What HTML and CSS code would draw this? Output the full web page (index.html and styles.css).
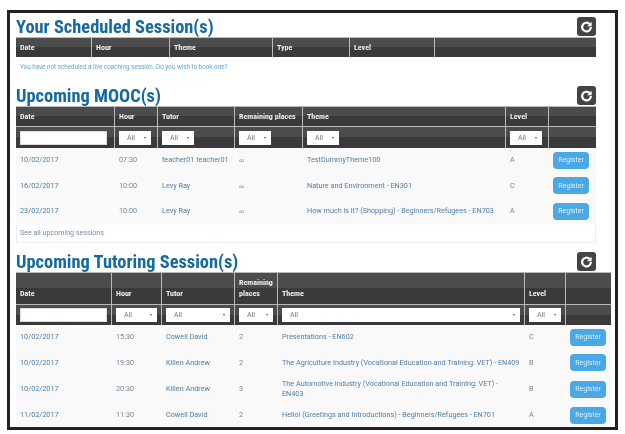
FILE: index.html
```html
<!DOCTYPE html>
<html lang="en">
<head>
    <meta charset="UTF-8">
    <meta name="viewport" content="width=device-width, initial-scale=1.0">
    <title>Sessions</title>
    <link rel="stylesheet" href="styles.css">
</head>
<body>
    <div class="frame">
        <section class="block">
            <div class="block-head">
                <h2>Your Scheduled Session(s)</h2>
                <button class="refresh-btn" aria-label="Refresh">
                    <svg viewBox="0 0 20 20" width="19" height="19"><path d="M13.3 7.4a4.6 4.6 0 1 0 1.3 3.1" fill="none" stroke="#fff" stroke-width="2.3"/><path d="M15.4 5v4.8h-4.8z" fill="#fff"/></svg>
                </button>
            </div>
            <table class="sessions scheduled">
                <colgroup><col class="c1"><col class="c2"><col class="c3"><col class="c4"><col class="c5"><col class="c6"></colgroup>
                <tr class="head-row"><th>Date</th><th>Hour</th><th>Theme</th><th>Type</th><th>Level</th><th></th></tr>
            </table>
            <p class="empty-msg">You have not scheduled a live coaching session. Do you wish to book one?</p>
        </section>

        <section class="block">
            <div class="block-head">
                <h2>Upcoming MOOC(s)</h2>
                <button class="refresh-btn" aria-label="Refresh">
                    <svg viewBox="0 0 20 20" width="19" height="19"><path d="M13.3 7.4a4.6 4.6 0 1 0 1.3 3.1" fill="none" stroke="#fff" stroke-width="2.3"/><path d="M15.4 5v4.8h-4.8z" fill="#fff"/></svg>
                </button>
            </div>
            <table class="sessions mooc">
                <colgroup><col class="c1"><col class="c2"><col class="c3"><col class="c4"><col class="c5"><col class="c6"><col class="c7"></colgroup>
                <tr class="head-row"><th>Date</th><th>Hour</th><th>Tutor</th><th>Remaining places</th><th>Theme</th><th>Level</th><th></th></tr>
                <tr class="filter-row">
                    <td><input class="filter-input" type="text"></td>
                    <td><div class="filter-select"><span>All</span><i></i></div></td>
                    <td><div class="filter-select"><span>All</span><i></i></div></td>
                    <td><div class="filter-select"><span>All</span><i></i></div></td>
                    <td><div class="filter-select"><span>All</span><i></i></div></td>
                    <td><div class="filter-select"><span>All</span><i></i></div></td>
                    <td></td>
                </tr>
                <tr class="data-row"><td class="link">10/02/2017</td><td class="muted">07:30</td><td class="link">teacher01 teacher01</td><td class="muted inf">∞</td><td class="link">TestDummyTheme100</td><td class="muted">A</td><td><button class="register-btn">Register</button></td></tr>
                <tr class="data-row"><td class="link">16/02/2017</td><td class="muted">10:00</td><td class="link">Levy Ray</td><td class="muted inf">∞</td><td class="link">Nature and Environment - EN301</td><td class="muted">C</td><td><button class="register-btn">Register</button></td></tr>
                <tr class="data-row"><td class="link">23/02/2017</td><td class="muted">10:00</td><td class="link">Levy Ray</td><td class="muted inf">∞</td><td class="link">How much is it? (Shopping) - Beginners/Refugees - EN703</td><td class="muted">A</td><td><button class="register-btn">Register</button></td></tr>
            </table>
            <div class="see-all">See all upcoming sessions</div>
        </section>

        <section class="block">
            <div class="block-head">
                <h2>Upcoming Tutoring Session(s)</h2>
                <button class="refresh-btn" aria-label="Refresh">
                    <svg viewBox="0 0 20 20" width="19" height="19"><path d="M13.3 7.4a4.6 4.6 0 1 0 1.3 3.1" fill="none" stroke="#fff" stroke-width="2.3"/><path d="M15.4 5v4.8h-4.8z" fill="#fff"/></svg>
                </button>
            </div>
            <table class="sessions tutoring">
                <colgroup><col class="c1"><col class="c2"><col class="c3"><col class="c4"><col class="c5"><col class="c6"><col class="c7"></colgroup>
                <tr class="head-row"><th>Date</th><th>Hour</th><th>Tutor</th><th>Remaining places</th><th>Theme</th><th>Level</th><th></th></tr>
                <tr class="filter-row">
                    <td><input class="filter-input" type="text"></td>
                    <td><div class="filter-select"><span>All</span><i></i></div></td>
                    <td><div class="filter-select"><span>All</span><i></i></div></td>
                    <td><div class="filter-select"><span>All</span><i></i></div></td>
                    <td><div class="filter-select"><span>All</span><i></i></div></td>
                    <td><div class="filter-select"><span>All</span><i></i></div></td>
                    <td></td>
                </tr>
                <tr class="data-row"><td class="link">10/02/2017</td><td class="muted">15:30</td><td class="link">Cowell David</td><td class="muted">2</td><td class="link">Presentations - EN602</td><td class="muted">C</td><td><button class="register-btn">Register</button></td></tr>
                <tr class="data-row"><td class="link">10/02/2017</td><td class="muted">19:30</td><td class="link">Killen Andrew</td><td class="muted">2</td><td class="link">The Agriculture Industry (Vocational Education and Training: VET) - EN409</td><td class="muted">B</td><td><button class="register-btn">Register</button></td></tr>
                <tr class="data-row tall"><td class="link">10/02/2017</td><td class="muted">20:30</td><td class="link">Killen Andrew</td><td class="muted">3</td><td class="link">The Automotive Industry (Vocational Education and Training: VET) - EN403</td><td class="muted">B</td><td><button class="register-btn">Register</button></td></tr>
                <tr class="data-row"><td class="link">11/02/2017</td><td class="muted">11:30</td><td class="link">Cowell David</td><td class="muted">2</td><td class="link">Hello! (Greetings and Introductions) - Beginners/Refugees - EN701</td><td class="muted">A</td><td><button class="register-btn">Register</button></td></tr>
            </table>
        </section>
    </div>
</body>
</html>
```

FILE: styles.css
```css
* {
    margin: 0;
    padding: 0;
    box-sizing: border-box;
}

body {
    font-family: 'Roboto', 'Liberation Sans', sans-serif;
    background: #fff;
    padding: 10px 7px;
}

/* the source is a soft, upscaled capture, hence the slight blur */
.frame {
    width: 611px;
    height: 420px;
    border: 3px solid #222;
    padding: 4px 0 0 6px;
    overflow: hidden;
    background: #fff;
    filter: blur(0.35px);
}

.block {
    width: 580px;
}

.block-head {
    display: flex;
    justify-content: space-between;
    align-items: flex-end;
    height: 20px;
}

h2 {
    font-size: 18.4px;
    line-height: 20px;
    font-weight: 700;
    font-stretch: condensed;
    color: #14699f;
    white-space: nowrap;
}

.refresh-btn {
    display: flex;
    width: 19px;
    height: 19px;
    margin-bottom: 1px;
    background: #444;
    border: none;
    border-radius: 3px;
}

.sessions {
    border-collapse: separate;
    border-spacing: 0;
    table-layout: fixed;
    width: 580px;
    font-size: 7.25px;
}

.tutoring {
    width: 595px;
}

.scheduled .c1 { width: 75px; }
.scheduled .c2 { width: 78px; }
.scheduled .c3 { width: 103px; }
.scheduled .c4 { width: 77px; }
.scheduled .c5 { width: 85px; }
.scheduled .c6 { width: 162px; }

.mooc .c1 { width: 98px; }
.mooc .c2 { width: 43px; }
.mooc .c3 { width: 77px; }
.mooc .c4 { width: 68px; }
.mooc .c5 { width: 203px; }
.mooc .c6 { width: 43px; }
.mooc .c7 { width: 48px; }

.tutoring .c1 { width: 95px; }
.tutoring .c2 { width: 50px; }
.tutoring .c3 { width: 73px; }
.tutoring .c4 { width: 43px; }
.tutoring .c5 { width: 247px; }
.tutoring .c6 { width: 41px; }
.tutoring .c7 { width: 46px; }

.head-row th {
    height: 20px;
    padding: 0 4px;
    text-align: left;
    font-size: 8px;
    line-height: 11px;
    font-weight: 700;
    font-stretch: condensed;
    color: #eee;
    background: linear-gradient(to bottom, #4c4c4c 50%, #3a3a3a 50%);
    border-left: 1px solid #bbb;
    border-top: 1px solid #bbb;
}

.tutoring .head-row th {
    height: 32px;
    vertical-align: bottom;
    padding-bottom: 5px;
}

.head-row th:first-child,
.filter-row td:first-child {
    border-left: none;
}

.filter-row td {
    height: 22px;
    padding: 0 4px;
    background: linear-gradient(to bottom, #4c4c4c 50%, #3a3a3a 50%);
    border-left: 1px solid #bbb;
    border-top: 1px solid #bbb;
}

.tutoring .filter-row td {
    height: 21px;
}

.filter-input {
    display: block;
    width: 87px;
    height: 14px;
    background: #fff;
    border: 1px solid #ddd;
}

.filter-select {
    display: flex;
    justify-content: space-between;
    align-items: center;
    width: 32px;
    height: 14px;
    padding: 0 5px 0 8px;
    background: #fff;
    color: #777;
    font-size: 7px;
}

.filter-select i {
    border-left: 1.5px solid transparent;
    border-right: 1.5px solid transparent;
    border-top: 2px solid #555;
}

.tutoring .filter-select {
    width: 100%;
}

.data-row td {
    height: 25.5px;
    padding: 0 4px;
    background: #f9f9f9;
    border-left: 1px solid #fcfcfc;
    border-bottom: 1px solid #fdfdfd;
    line-height: 10px;
}

.data-row.tall td {
    height: 27px;
}

.data-row td:first-child {
    border-left: none;
}

.link {
    color: #4f7ea6;
}

.muted {
    color: #74889a;
}

.data-row .inf {
    font-size: 5px;
}

.register-btn {
    display: block;
    width: 36px;
    height: 17px;
    background: #4aa8e4;
    border: none;
    border-radius: 4px;
    color: #d8eefb;
    font-family: inherit;
    font-size: 7px;
}

.empty-msg {
    height: 29px;
    padding: 6px 4px 0;
    font-size: 6.3px;
    line-height: 9px;
    color: #64a5ce;
}

.see-all {
    height: 18px;
    padding: 0 3px;
    line-height: 16px;
    font-size: 7.1px;
    color: #6f8fb2;
    background: #fff;
    border: 1px solid #eee;
    border-top: none;
    margin-bottom: 9.5px;
}
```
